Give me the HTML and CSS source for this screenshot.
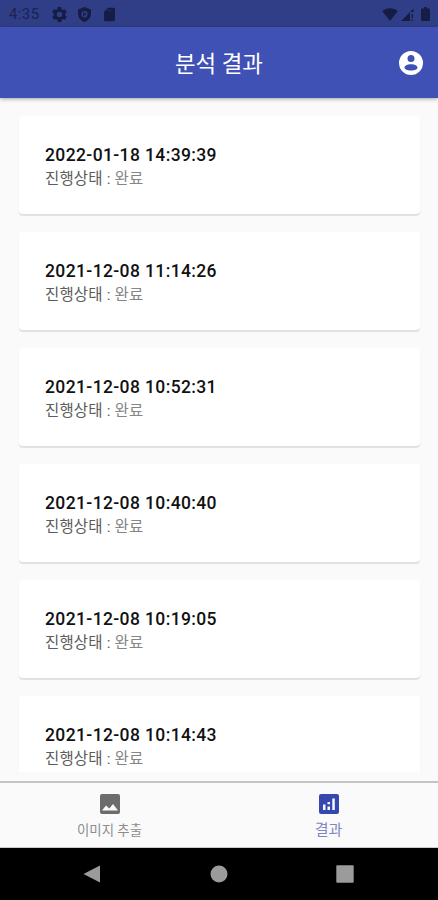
FILE: index.html
```
<!DOCTYPE html>
<html lang="ko">
<head>
<meta charset="utf-8">
<meta name="viewport" content="width=device-width, initial-scale=1">
<title>분석 결과</title>
<link rel="stylesheet" href="styles.css">
</head>
<body>
<div class="screen">
  <div class="status">
    <span class="clock">4:35</span>
    <svg class="s-icon gear" viewBox="2 2 20 20"><path d="M19.400 13c.1-.3.1-.6.1-1s0-.7-.1-1l2.100-1.600c.2-.1.2-.4.1-.6l-2-3.500c-.1-.2-.4-.3-.6-.2l-2.500 1c-.5-.4-1.100-.7-1.700-1L14.400 2.400c0-.2-.2-.4-.5-.4h-4c-.200 0-.4.200-.5.400L9.100 5.100c-.6.300-1.200.600-1.700 1l-2.500-1c-.2-.1-.5 0-.6.2l-2 3.500c-.1.200-.1.500.1.600L4.500 11c0 .300-.1.600-.1 1s0 .700.1 1l-2.100 1.600c-.2.200-.2.400-.1.600l2 3.500c.1.200.4.300.6.200l2.500-1c.5.400 1.100.700 1.700 1l.4 2.700c0 .200.2.400.5.400h4c.3 0 .5-.200.5-.400l.4-2.700c.6-.300 1.200-.600 1.700-1l2.500 1c.2.100.5 0 .6-.200l2-3.500c.1-.200.1-.500-.1-.600zM12 15.600a3.600 3.600 0 1 1 0-7.200 3.600 3.600 0 0 1 0 7.200z"/></svg>
    <svg class="s-icon shield" viewBox="1 1 22 22"><path fill-rule="evenodd" d="M12 1 2.500 4.500V11c0 5.600 4 10.300 9.500 12 5.500-1.700 9.500-6.400 9.500-12V4.500zM12 7a4.500 4.500 0 1 1 0 9 4.500 4.500 0 0 1 0-9zM10 8.500v6l5-3z"/></svg>
    <svg class="s-icon card-icon" viewBox="1 1 22 22"><path fill-rule="evenodd" d="M18 2h-8L4 8v12a2 2 0 0 0 2 2h12a2 2 0 0 0 2-2V4a2 2 0 0 0-2-2zM9 5h1v2H9zm3 0h1v2h-1zm3 0h1v2h-1z"/></svg>
    <span class="spacer"></span>
    <svg class="wifi" viewBox="0 0 16 13"><path d="M8 13 .3 3.200C4.500-.6 11.500-.6 15.700 3.200z"/></svg>
    <svg class="signal" viewBox="0 0 13 13"><path d="M0 13 12.500.5V4H9v9z"/><path d="M10.500 6H12v4h-1.500zM10.500 11.500H12V13h-1.500z"/></svg>
    <svg class="battery" viewBox="0 0 9 14"><path d="M3 0h3v1.500h2q1 0 1 1V13q0 1-1 1H1q-1 0-1-1V2.500q0-1 1-1h2z"/></svg>
  </div>
  <header class="appbar">
    <h1>분석 결과</h1>
    <svg class="account" viewBox="0 0 24 24"><path fill-rule="evenodd" d="M12 0a12 12 0 1 0 0 24 12 12 0 0 0 0-24zM12 4a3.500 3.500 0 1 1 0 7 3.500 3.500 0 0 1 0-7zM12 13.200c3.800 0 6.500 1.600 6.500 3.300S15.800 19.500 12 19.500 5.500 18.200 5.500 16.500 8.200 13.200 12 13.200z"/></svg>
  </header>
  <main class="list">
    <article class="card"><h2>2022-01-18 14:39:39</h2><p><b>진행상태 :</b> 완료</p></article>
    <article class="card"><h2>2021-12-08 11:14:26</h2><p><b>진행상태 :</b> 완료</p></article>
    <article class="card"><h2>2021-12-08 10:52:31</h2><p><b>진행상태 :</b> 완료</p></article>
    <article class="card"><h2>2021-12-08 10:40:40</h2><p><b>진행상태 :</b> 완료</p></article>
    <article class="card"><h2>2021-12-08 10:19:05</h2><p><b>진행상태 :</b> 완료</p></article>
    <article class="card"><h2>2021-12-08 10:14:43</h2><p><b>진행상태 :</b> 완료</p></article>
  </main>
  <nav class="tabs">
    <a class="tab">
      <svg viewBox="0 0 20 20"><path fill-rule="evenodd" d="M2 0h16a2 2 0 0 1 2 2v16a2 2 0 0 1-2 2H2a2 2 0 0 1-2-2V2a2 2 0 0 1 2-2zM2 16.500h16L13 10l-3.700 4.500L6 11.500z"/></svg>
      <span>이미지 추출</span>
    </a>
    <a class="tab active">
      <svg viewBox="0 0 20 20"><path fill-rule="evenodd" d="M2 0h16a2 2 0 0 1 2 2v16a2 2 0 0 1-2 2H2a2 2 0 0 1-2-2V2a2 2 0 0 1 2-2zM4 10.500V16h2.500v-5.500zM8.500 8v2.300H11V8zM8.500 12.500V16H11v-3.500zM13.300 4.500V16h2.500V4.500z"/></svg>
      <span>결과</span>
    </a>
  </nav>
  <div class="system">
    <svg viewBox="0 0 18 18"><path d="M17 .5v17L.5 9z"/></svg>
    <svg viewBox="0 0 18 18"><circle cx="9" cy="9" r="8.500"/></svg>
    <svg viewBox="0 0 18 18"><rect x=".3" y=".3" width="17.400" height="17.400" rx="1"/></svg>
  </div>
</div>
</body>
</html>
```
FILE: styles.css
```
* { box-sizing: border-box; }
body { margin: 0; font-family: Roboto, "Noto Sans CJK KR", sans-serif; }
h1, h2, p { margin: 0; }
svg { display: block; flex: none; fill: currentColor; }

.screen { display: flex; flex-direction: column; width: 438px; height: 900px; overflow: hidden; background: #fafafa; }

.status { display: flex; align-items: center; height: 27px; flex: none; padding: 1px 8px 0 9px; background: #303e87; color: #151d45; }
.clock { width: 43px; font-size: 15px; line-height: 20px; letter-spacing: .4px; color: #1b234f; }
.s-icon { width: 15px; height: 15px; margin-right: 10px; }
.spacer { flex: 1; }
.wifi { width: 16px; height: 13px; margin-right: 3px; }
.signal { width: 13px; height: 13px; margin-right: 7px; }
.battery { width: 9px; height: 14px; }

.appbar { display: grid; grid-template-columns: 1fr auto 1fr; align-items: center; height: 71px; flex: none; padding: 0 15px; background: #3f51b5; color: #fff; box-shadow: 0 1px 4px rgba(0, 0, 0, .35); z-index: 1; }
.appbar h1 { grid-column: 2; padding-top: 2px; font-size: 22.400px; font-weight: 400; line-height: 32px; white-space: nowrap; }
.account { width: 24px; height: 24px; justify-self: end; }

.list { display: flex; flex-direction: column; gap: 18px; height: 674px; flex: none; padding: 18px 18px 0 19px; overflow: hidden; }
.card { height: 98px; flex: none; padding: 27px 26px; border-radius: 4px; background: #fff; box-shadow: 0 2px 1px rgba(0, 0, 0, .1); }
.card h2 { font-size: 17.500px; font-weight: 500; line-height: 24px; letter-spacing: .38px; color: #111; white-space: nowrap; }
.card p { font-size: 15.500px; line-height: 24px; letter-spacing: .15px; color: #858585; white-space: nowrap; }
.card b { font-weight: 400; color: #5c5c5c; }

.tabs { display: flex; height: 67px; flex: none; margin-top: 9px; border-top: 2px solid #c4c4c4; border-bottom: 1px solid #ccc; background: #fafafa; }
.tab { display: flex; flex: 1; flex-direction: column; align-items: center; padding-top: 11px; color: #757575; }
.tab svg { width: 20px; height: 20px; color: #6c6c6c; }
.tab span { margin-top: 7px; font-size: 13.400px; line-height: 20px; color: #8c8c8c; }
.tab.active svg { color: #3448b0; }
.tab.active span { margin-top: 6px; font-size: 15px; color: #7f86c6; }

.system { display: flex; justify-content: space-between; align-items: center; height: 53px; flex: 1; padding: 0 84px 0 83px; background: #000; color: #9b9b9b; }
.system svg { width: 18px; height: 18px; }
```
